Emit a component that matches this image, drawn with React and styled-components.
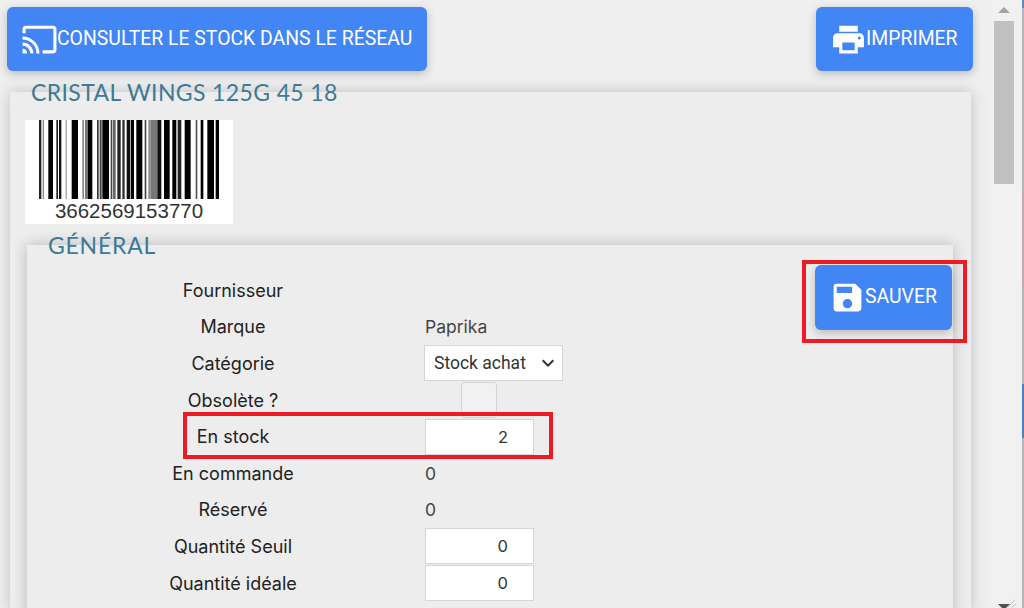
import React from 'react'
import styled, { createGlobalStyle } from 'styled-components'
import { MdCast, MdPrint, MdSave, MdExpandMore } from 'react-icons/md'

// x, width, colour measured on the zoomed barcode (3x units)
const BARS = [
  [0, 7, '#222'], [11, 4, '#888'], [28, 14, '#000'], [52, 5, '#222'], [60, 7, '#111'], [80, 3, '#888'], [98, 19, '#000'],
  [130, 5, '#888'], [138, 9, '#777'], [147, 13, '#000'], [174, 5, '#333'], [182, 6, '#444'], [190, 20, '#000'], [215, 5, '#444'],
  [222, 8, '#666'], [235, 10, '#222'], [250, 7, '#333'], [263, 10, '#111'], [275, 10, '#000'], [292, 18, '#000'], [317, 5, '#444'],
  [328, 7, '#888'], [335, 20, '#777'], [355, 12, '#111'], [375, 17, '#000'], [400, 12, '#000'], [416, 11, '#222'], [437, 18, '#000'],
  [470, 5, '#555'], [485, 8, '#000'], [505, 20, '#000'], [530, 10, '#000'],
]

const Global = createGlobalStyle`
  html, body { margin: 0; height: 100%; overflow: hidden; }
  body { background: #efefef; font-family: Roboto, "Liberation Sans", sans-serif; color: #222; }
`

function App() {
  return (
    <Page>
      <Global />
      <Content>
        <TopBar>
          <BlueButton $width="420px" $height="64px" $padding="0 0 0 14px">
            <MdCast size={37} />
            <ButtonText>CONSULTER LE STOCK DANS LE RÉSEAU</ButtonText>
          </BlueButton>
          <BlueButton $width="157px" $height="64px" $padding="0 0 0 14px">
            <MdPrint size={37} />
            <ButtonText>IMPRIMER</ButtonText>
          </BlueButton>
        </TopBar>

        <Card>
          <Title>CRISTAL WINGS 125G 45 18</Title>
          <Barcode>
            <BarsSvg viewBox="0 0 543 240" preserveAspectRatio="none">
              {BARS.map(([x, w, c], i) => (
                <rect key={i} x={x} y="0" width={w} height="240" fill={c} />
              ))}
            </BarsSvg>
            <BarcodeNumber>3662569153770</BarcodeNumber>
          </Barcode>

          <Panel>
            <PanelTitle>GÉNÉRAL</PanelTitle>
            <Form>
              <Row><Label>Fournisseur</Label></Row>
              <Row>
                <Label>Marque</Label>
                <Value>Paprika</Value>
              </Row>
              <Row>
                <Label>Catégorie</Label>
                <SelectBox>
                  Stock achat
                  <MdExpandMore size={24} />
                </SelectBox>
              </Row>
              <Row>
                <Label>Obsolète ?</Label>
                <Check />
              </Row>
              <Row>
                <Label>En stock</Label>
                <NumberBox>2</NumberBox>
                <StockMark />
              </Row>
              <Row>
                <Label>En commande</Label>
                <Value>0</Value>
              </Row>
              <Row>
                <Label>Réservé</Label>
                <Value>0</Value>
              </Row>
              <Row>
                <Label>Quantité Seuil</Label>
                <NumberBox>0</NumberBox>
              </Row>
              <Row>
                <Label>Quantité idéale</Label>
                <NumberBox>0</NumberBox>
              </Row>
            </Form>
            <SaveWrap>
              <BlueButton $width="137px" $height="65px" $padding="0 0 0 14px">
                <MdSave size={37} />
                <ButtonText>SAUVER</ButtonText>
              </BlueButton>
            </SaveWrap>
          </Panel>
        </Card>
      </Content>

      <ScrollBar>
        <Arrow />
        <Thumb />
        <Arrow $down />
        <Grip viewBox="0 0 10 10">
          <path d="M1 9 L9 1 M5 10 L10 5" stroke="#bbb" strokeWidth="1" fill="none" />
        </Grip>
      </ScrollBar>
      <Edge />
    </Page>
  )
}

const Page = styled.div`
  display: flex;
  width: 1024px;
  height: 608px;
  overflow: hidden;
`

const Content = styled.div`
  width: 991px;
  flex: none;
  padding: 7px 0 0 7px;
  box-sizing: border-box;
`

const TopBar = styled.div`
  display: flex;
  justify-content: space-between;
  width: 966px;
`

const BlueButton = styled.div`
  display: flex;
  align-items: center;
  box-sizing: border-box;
  width: ${(p) => p.$width};
  height: ${(p) => p.$height};
  padding: ${(p) => p.$padding};
  background: #4285f4;
  border-radius: 6px;
  box-shadow: 0 3px 10px rgba(0, 0, 0, 0.22);
  color: #fff;
  font-size: 19.4px;
  white-space: nowrap;
  svg { flex: none; }
`

const ButtonText = styled.span`
  margin: 0 0 2px -1px;
`

const Card = styled.div`
  position: relative;
  width: 961px;
  height: 520px;
  margin: 21px 0 0 3px;
  padding: 28px 0 0 15px;
  box-sizing: border-box;
  background: #ededed;
  box-shadow: 0 0 14px rgba(0, 0, 0, 0.2);
`

const Title = styled.h2`
  position: absolute;
  left: 21px;
  top: -13px;
  margin: 0;
  color: #3c7a97;
  font-family: Lato, sans-serif;
  font-size: 23px;
  font-weight: 400;
  letter-spacing: 0.37px;
  line-height: 27px;
`

const Barcode = styled.div`
  display: flex;
  flex-direction: column;
  align-items: center;
  width: 208px;
  height: 104px;
  background: #fff;
`

const BarsSvg = styled.svg`
  display: block;
  width: 181px;
  height: 79px;
  flex: none;
  filter: blur(0.5px);
`

const BarcodeNumber = styled.div`
  color: #333;
  font-family: "Liberation Sans", sans-serif;
  font-size: 20.5px;
  line-height: 24px;
`

const Panel = styled.div`
  position: relative;
  width: 926px;
  height: 420px;
  margin: 21px 0 0 2px;
  background: #ededed;
  box-shadow: 0 0 14px rgba(0, 0, 0, 0.22);
`

const PanelTitle = styled.h3`
  position: absolute;
  left: 21px;
  top: -13px;
  margin: 0;
  color: #3c7a97;
  font-family: Lato, sans-serif;
  font-size: 23px;
  font-weight: 400;
  letter-spacing: 0.77px;
  line-height: 27px;
`

const Form = styled.div`
  display: flex;
  flex-direction: column;
  padding-top: 27px;
`

const Row = styled.div`
  position: relative;
  display: flex;
  align-items: center;
  height: 36.6px;
`

const Label = styled.div`
  width: 398px;
  flex: none;
  padding-left: 14px;
  box-sizing: border-box;
  text-align: center;
  color: #222;
  font-family: Inter, Roboto, sans-serif;
  font-size: 18px;
`

const Value = styled.div`
  color: #444;
  font-family: Inter, Roboto, sans-serif;
  font-size: 17.5px;
`

const SelectBox = styled.div`
  display: flex;
  align-items: center;
  justify-content: space-between;
  box-sizing: border-box;
  width: 139px;
  height: 36px;
  padding: 0 2px 0 9px;
  margin-left: -1px;
  background: #fff;
  border: 1px solid #d6d6d6;
  color: #333;
  font-size: 17.5px;
`

const Check = styled.div`
  width: 36px;
  height: 36px;
  box-sizing: border-box;
  margin-left: 36px;
  background: #f1f1f1;
  border: 1px solid #d4d4d4;
  border-radius: 3px;
`

const NumberBox = styled.div`
  box-sizing: border-box;
  width: 109px;
  height: 36px;
  padding-right: 25px;
  background: #fff;
  border: 1px solid #d6d6d6;
  color: #333;
  font-family: Inter, Roboto, sans-serif;
  font-size: 16.5px;
  line-height: 34px;
  text-align: right;
`

const StockMark = styled.div`
  position: absolute;
  left: 156px;
  top: -6px;
  width: 370px;
  height: 47px;
  box-sizing: border-box;
  border: 4px solid #ed1c24;
  pointer-events: none;
`

const SaveWrap = styled.div`
  position: absolute;
  left: 775px;
  top: 15px;
  padding: 1px 11px 9px 9px;
  border: 4px solid #ed1c24;
`

const ScrollBar = styled.div`
  position: relative;
  display: flex;
  flex-direction: column;
  align-items: center;
  width: 31px;
  height: 608px;
  flex: none;
  box-sizing: border-box;
  padding: 0 8px 0 3px;
  background: #f1f1f1;
`

const Arrow = styled.div`
  flex: none;
  width: 0;
  height: 0;
  margin: ${(p) => (p.$down ? 'auto 0 -2px' : '7px 0 8px')};
  border-left: 6px solid transparent;
  border-right: 6px solid transparent;
  ${(p) => (p.$down ? 'border-top: 6px solid #505050;' : 'border-bottom: 6px solid #a3a3a3;')}
`

const Thumb = styled.div`
  flex: none;
  width: 20px;
  height: 163px;
  background: #c1c1c1;
`

const Grip = styled.svg`
  position: absolute;
  right: 6px;
  bottom: 0;
  width: 9px;
  height: 9px;
`

const Edge = styled.div`
  width: 2px;
  flex: none;
  background: linear-gradient(
    #5b8cc4 0 8px, #b4b4b4 8px 194px, #c4a8ac 194px 284px, #b4b4b4 284px 384px,
    #4f7fc4 384px 438px, #b4b4b4 438px
  );
`

export default App
